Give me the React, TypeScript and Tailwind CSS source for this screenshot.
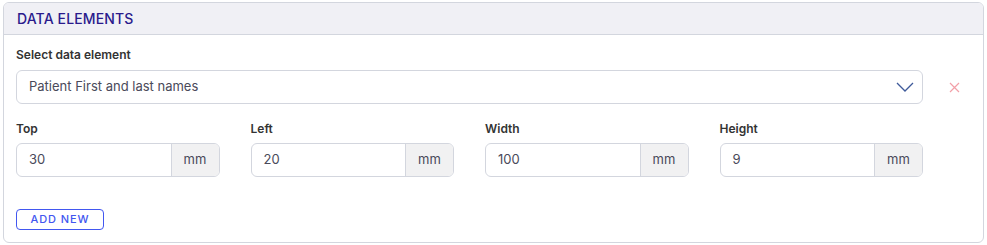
import React from 'react';

const fields = [
  { label: 'Top', value: '30' },
  { label: 'Left', value: '20' },
  { label: 'Width', value: '100' },
  { label: 'Height', value: '9' },
];

const App: React.FC = () => {
  return (
    <div className="w-[987px] h-[245px] bg-white pt-[2px] px-[3px] font-['Inter',sans-serif]">
      <div className="h-[241px] border border-[#d3d6de] rounded-[6px] overflow-hidden">
        <header className="h-[32px] bg-[#f0f0f5] border-b border-[#d3d6de] px-[13px] flex items-center">
          <h2 className="text-[14px] font-medium text-[#2a1a8c] tracking-[0.01em] leading-none pt-[1px]">DATA ELEMENTS</h2>
        </header>

        <div className="px-[12px] pt-[12px]">
          <label className="block text-[12px] font-semibold text-[#333] leading-[16px] mb-[7px]">Select data element</label>
          <div className="flex items-center">
            <div className="w-[907px] h-[34px] border border-[#d3d6de] rounded-[6px] flex items-center justify-between pl-[12px] pr-[8px]">
              <span className="text-[13px] text-[#4a4a5a]">Patient First and last names</span>
              <svg width="18" height="10" viewBox="0 0 18 10" fill="none">
                <path d="M1 1l8 8 8-8" stroke="#3e5a9a" strokeWidth="1.3" />
              </svg>
            </div>
            <button className="ml-[25px] w-[12px] h-[12px] flex items-center justify-center">
              <svg width="11" height="11" viewBox="0 0 11 11" fill="none">
                <path d="M1 1l9 9M10 1l-9 9" stroke="#f2a0a8" strokeWidth="1.2" />
              </svg>
            </button>
          </div>

          <div className="w-[907px] grid grid-cols-4 gap-x-[31px] mt-[17px]">
            {fields.map(f => (
              <div key={f.label}>
                <label className="block text-[12px] font-semibold text-[#333] leading-[16px] mb-[6px]">{f.label}</label>
                <div className="flex h-[34px] border border-[#d3d6de] rounded-[6px] overflow-hidden">
                  <span className="flex-1 flex items-center pl-[12px] text-[13px] text-[#4a4a5a]">{f.value}</span>
                  <span className="w-[48px] bg-[#f1f1f2] border-l border-[#d3d6de] flex items-center justify-center text-[13px] text-[#4a4a5a]">mm</span>
                </div>
              </div>
            ))}
          </div>

          <button className="mt-[32px] w-[88px] h-[21px] border border-[#4257f0] rounded-[4px] text-[11px] font-medium tracking-[0.08em] text-[#4257f0] flex items-center justify-center leading-none">
            ADD NEW
          </button>
        </div>
      </div>
    </div>
  );
};

export default App;
